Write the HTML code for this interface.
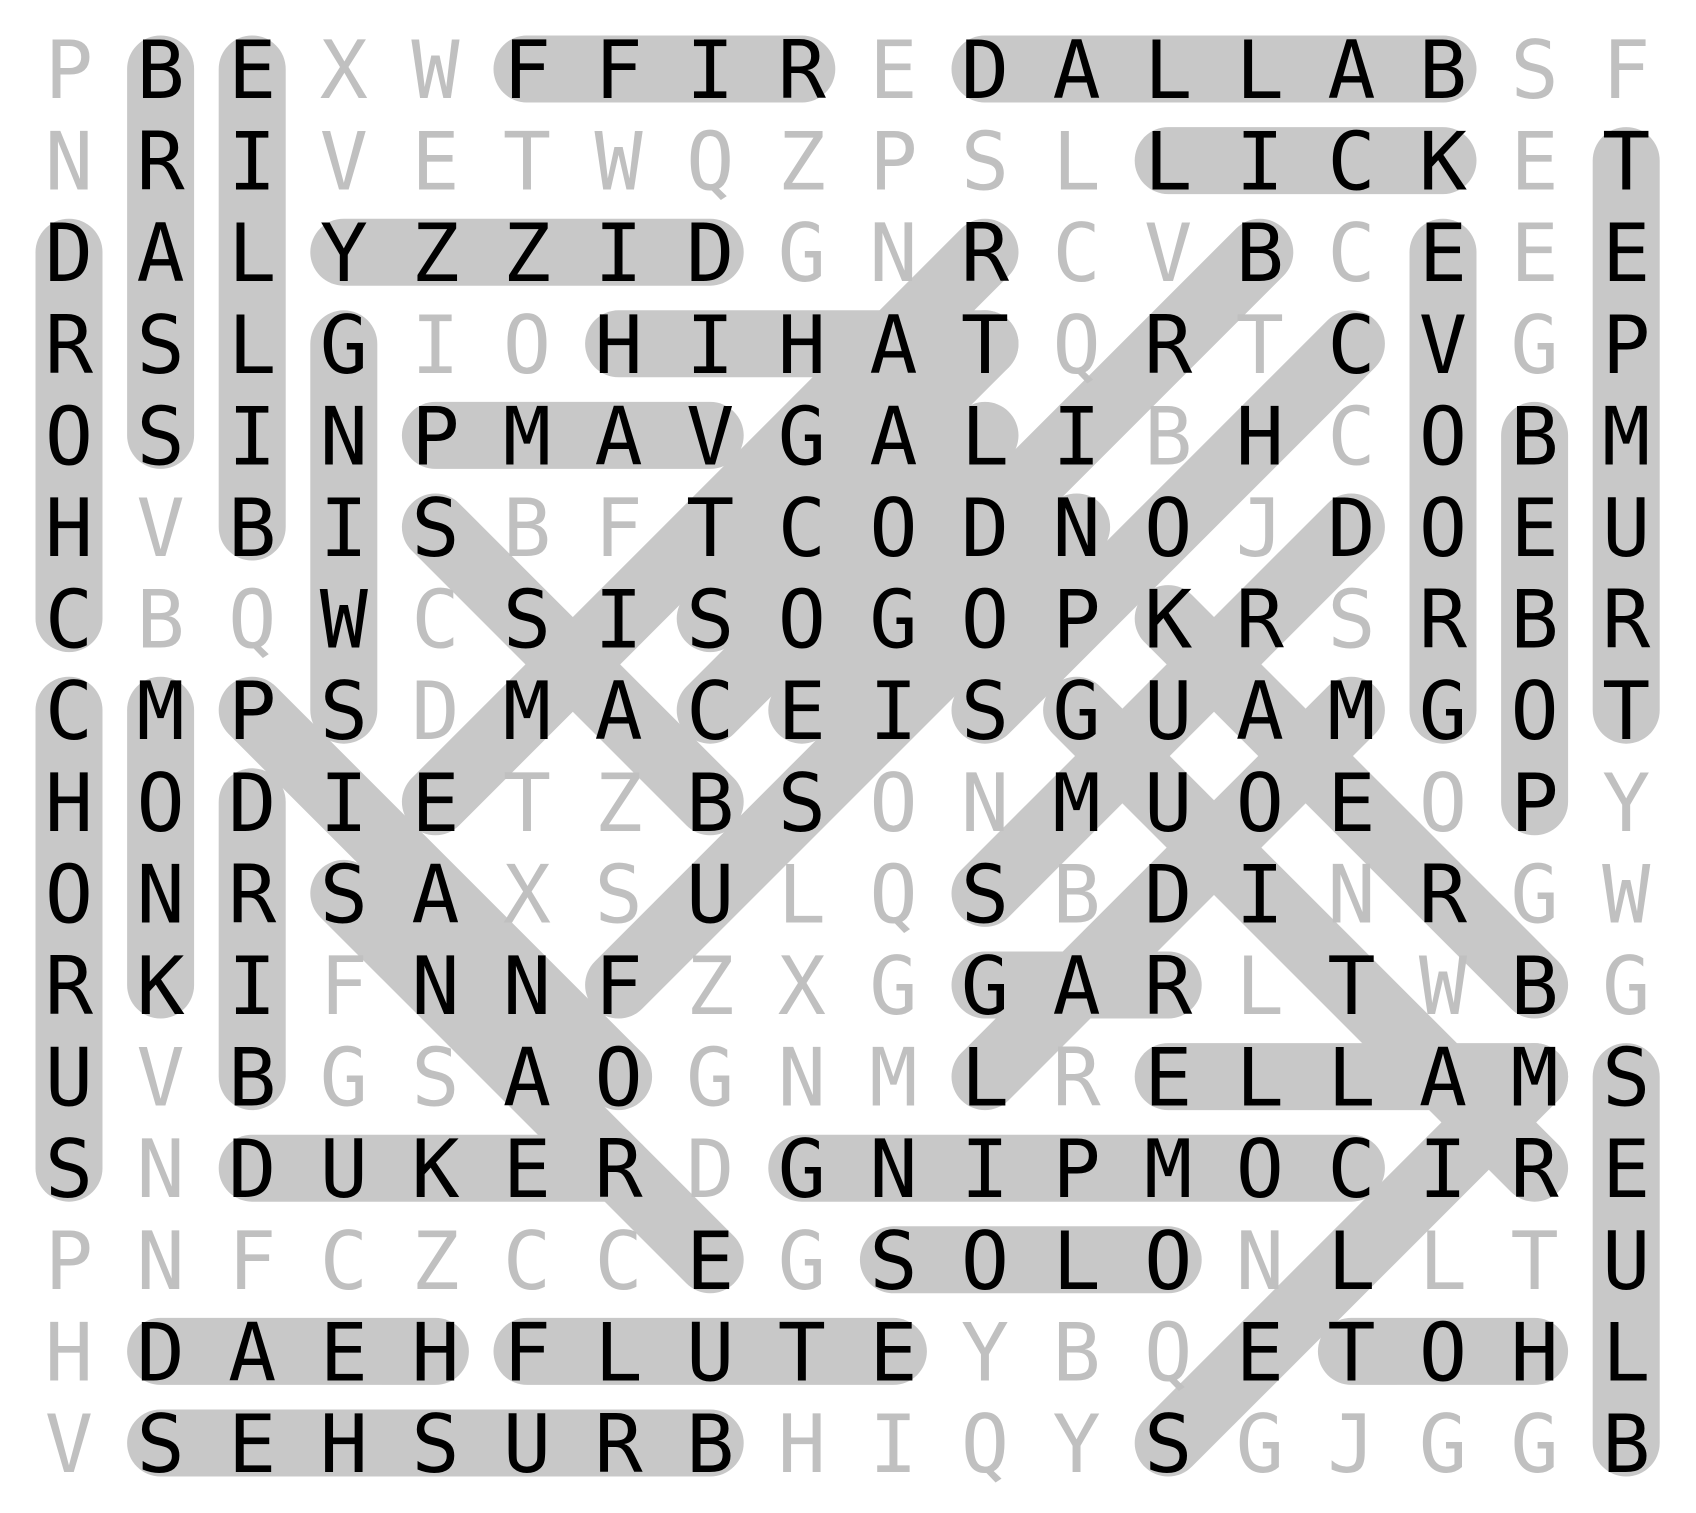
<!DOCTYPE html>
<html><head><meta charset="utf-8"><style>
html,body{margin:0;padding:0;background:#fff;}
svg{display:block;}
text{font-family:"DejaVu Sans Mono","Liberation Mono",monospace;font-size:80px;fill:#000;text-anchor:middle;}
.g{fill:#c0c0c0;}
</style></head><body>
<svg width="1696" height="1513" viewBox="0 0 1696 1513" xmlns="http://www.w3.org/2000/svg">
<g transform="translate(69,69) scale(91.6)" stroke="#c8c8c8" stroke-width="0.7314" stroke-linecap="round" fill="none">
<line x1="5" y1="0" x2="8" y2="0"/><line x1="10" y1="0" x2="15" y2="0"/><line x1="12" y1="1" x2="15" y2="1"/>
<line x1="3" y1="2" x2="7" y2="2"/><line x1="6" y1="3" x2="10" y2="3"/><line x1="4" y1="4" x2="7" y2="4"/>
<line x1="10" y1="10" x2="12" y2="10"/><line x1="12" y1="11" x2="16" y2="11"/><line x1="2" y1="12" x2="6" y2="12"/>
<line x1="8" y1="12" x2="14" y2="12"/><line x1="9" y1="13" x2="12" y2="13"/><line x1="1" y1="14" x2="4" y2="14"/>
<line x1="5" y1="14" x2="9" y2="14"/><line x1="14" y1="14" x2="16" y2="14"/><line x1="1" y1="15" x2="7" y2="15"/>
<line x1="1" y1="0" x2="1" y2="4"/><line x1="2" y1="0" x2="2" y2="5"/><line x1="0" y1="2" x2="0" y2="6"/>
<line x1="3" y1="3" x2="3" y2="7"/><line x1="17" y1="1" x2="17" y2="7"/><line x1="15" y1="2" x2="15" y2="7"/>
<line x1="16" y1="4" x2="16" y2="8"/><line x1="0" y1="7" x2="0" y2="12"/><line x1="1" y1="7" x2="1" y2="10"/>
<line x1="2" y1="8" x2="2" y2="11"/><line x1="17" y1="11" x2="17" y2="15"/>
<line x1="10" y1="2" x2="4" y2="8"/><line x1="13" y1="2" x2="8" y2="7"/><line x1="14" y1="3" x2="10" y2="7"/>
<line x1="14" y1="5" x2="10" y2="9"/><line x1="7" y1="6" x2="10" y2="3"/><line x1="10" y1="4" x2="7" y2="7"/>
<line x1="6" y1="10" x2="11" y2="5"/><line x1="14" y1="7" x2="10" y2="11"/><line x1="12" y1="15" x2="16" y2="11"/>
<line x1="4" y1="5" x2="7" y2="8"/><line x1="2" y1="7" x2="6" y2="11"/><line x1="3" y1="9" x2="7" y2="13"/>
<line x1="12" y1="6" x2="16" y2="10"/><line x1="11" y1="7" x2="16" y2="12"/>
</g>
<g>
<text x="69 160.6 252.2 343.8 435.4 527 618.6 710.2 801.8 893.4 985 1076.6 1168.2 1259.8 1351.4 1443 1534.6 1626.2" y="98"><tspan class="g">P</tspan>BE<tspan class="g">XW</tspan>FFIR<tspan class="g">E</tspan>DALLAB<tspan class="g">SF</tspan></text>
<text x="69 160.6 252.2 343.8 435.4 527 618.6 710.2 801.8 893.4 985 1076.6 1168.2 1259.8 1351.4 1443 1534.6 1626.2" y="189.6"><tspan class="g">N</tspan>RI<tspan class="g">VETWQZPSL</tspan>LICK<tspan class="g">E</tspan>T</text>
<text x="69 160.6 252.2 343.8 435.4 527 618.6 710.2 801.8 893.4 985 1076.6 1168.2 1259.8 1351.4 1443 1534.6 1626.2" y="281.2">DALYZZID<tspan class="g">GN</tspan>R<tspan class="g">CV</tspan>B<tspan class="g">C</tspan>E<tspan class="g">E</tspan>E</text>
<text x="69 160.6 252.2 343.8 435.4 527 618.6 710.2 801.8 893.4 985 1076.6 1168.2 1259.8 1351.4 1443 1534.6 1626.2" y="372.8">RSLG<tspan class="g">IO</tspan>HIHAT<tspan class="g">Q</tspan>R<tspan class="g">T</tspan>CV<tspan class="g">G</tspan>P</text>
<text x="69 160.6 252.2 343.8 435.4 527 618.6 710.2 801.8 893.4 985 1076.6 1168.2 1259.8 1351.4 1443 1534.6 1626.2" y="464.4">OSINPMAVGALI<tspan class="g">B</tspan>H<tspan class="g">C</tspan>OBM</text>
<text x="69 160.6 252.2 343.8 435.4 527 618.6 710.2 801.8 893.4 985 1076.6 1168.2 1259.8 1351.4 1443 1534.6 1626.2" y="556">H<tspan class="g">V</tspan>BIS<tspan class="g">BF</tspan>TCODNO<tspan class="g">J</tspan>DOEU</text>
<text x="69 160.6 252.2 343.8 435.4 527 618.6 710.2 801.8 893.4 985 1076.6 1168.2 1259.8 1351.4 1443 1534.6 1626.2" y="647.6">C<tspan class="g">BQ</tspan>W<tspan class="g">C</tspan>SISOGOPKR<tspan class="g">S</tspan>RBR</text>
<text x="69 160.6 252.2 343.8 435.4 527 618.6 710.2 801.8 893.4 985 1076.6 1168.2 1259.8 1351.4 1443 1534.6 1626.2" y="739.2">CMPS<tspan class="g">D</tspan>MACEISGUAMGOT</text>
<text x="69 160.6 252.2 343.8 435.4 527 618.6 710.2 801.8 893.4 985 1076.6 1168.2 1259.8 1351.4 1443 1534.6 1626.2" y="830.8">HODIE<tspan class="g">TZ</tspan>BS<tspan class="g">ON</tspan>MUOE<tspan class="g">O</tspan>P<tspan class="g">Y</tspan></text>
<text x="69 160.6 252.2 343.8 435.4 527 618.6 710.2 801.8 893.4 985 1076.6 1168.2 1259.8 1351.4 1443 1534.6 1626.2" y="922.4">ONRSA<tspan class="g">XS</tspan>U<tspan class="g">LQ</tspan>S<tspan class="g">B</tspan>DI<tspan class="g">N</tspan>R<tspan class="g">GW</tspan></text>
<text x="69 160.6 252.2 343.8 435.4 527 618.6 710.2 801.8 893.4 985 1076.6 1168.2 1259.8 1351.4 1443 1534.6 1626.2" y="1014">RKI<tspan class="g">F</tspan>NNF<tspan class="g">ZXG</tspan>GAR<tspan class="g">L</tspan>T<tspan class="g">W</tspan>B<tspan class="g">G</tspan></text>
<text x="69 160.6 252.2 343.8 435.4 527 618.6 710.2 801.8 893.4 985 1076.6 1168.2 1259.8 1351.4 1443 1534.6 1626.2" y="1105.6">U<tspan class="g">V</tspan>B<tspan class="g">GS</tspan>AO<tspan class="g">GNM</tspan>L<tspan class="g">R</tspan>ELLAMS</text>
<text x="69 160.6 252.2 343.8 435.4 527 618.6 710.2 801.8 893.4 985 1076.6 1168.2 1259.8 1351.4 1443 1534.6 1626.2" y="1197.2">S<tspan class="g">N</tspan>DUKER<tspan class="g">D</tspan>GNIPMOCIRE</text>
<text x="69 160.6 252.2 343.8 435.4 527 618.6 710.2 801.8 893.4 985 1076.6 1168.2 1259.8 1351.4 1443 1534.6 1626.2" y="1288.8"><tspan class="g">PNFCZCC</tspan>E<tspan class="g">G</tspan>SOLO<tspan class="g">N</tspan>L<tspan class="g">LT</tspan>U</text>
<text x="69 160.6 252.2 343.8 435.4 527 618.6 710.2 801.8 893.4 985 1076.6 1168.2 1259.8 1351.4 1443 1534.6 1626.2" y="1380.4"><tspan class="g">H</tspan>DAEHFLUTE<tspan class="g">YBQ</tspan>ETOHL</text>
<text x="69 160.6 252.2 343.8 435.4 527 618.6 710.2 801.8 893.4 985 1076.6 1168.2 1259.8 1351.4 1443 1534.6 1626.2" y="1472"><tspan class="g">V</tspan>SEHSURB<tspan class="g">HIQY</tspan>S<tspan class="g">GJGG</tspan>B</text>
</g>
</svg>
</body></html>
